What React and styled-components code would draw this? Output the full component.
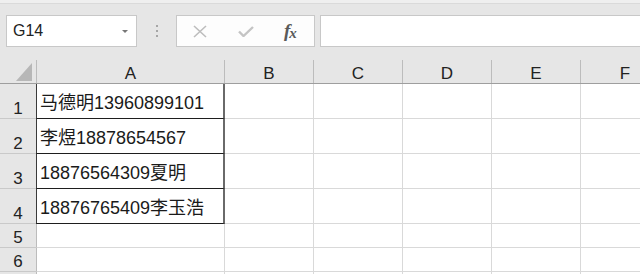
import React from "react";
import styled, { createGlobalStyle } from "styled-components";

const GlobalStyle = createGlobalStyle`
  body {
    margin: 0;
    background: #ffffff;
    font-family: "Liberation Sans", "Noto Sans CJK SC", sans-serif;
    overflow: hidden;
  }
`;

const columns = ["A", "B", "C", "D", "E", "F"];

const rows = [
  { n: 1, text: "马德明13960899101", tall: true, boxed: true },
  { n: 2, text: "李煜18878654567", tall: true, boxed: true },
  { n: 3, text: "18876564309夏明", tall: true, boxed: true },
  { n: 4, text: "18876765409李玉浩", tall: true, boxed: true },
  { n: 5, text: "", tall: false },
  { n: 6, text: "", tall: false },
  // row 7 only peeks in at the bottom edge, its number is off-screen
  { n: "", text: "", tall: false },
];

const Sheet = () => {
  return (
    <Container>
      <GlobalStyle />
      <Toolbar>
        <NameBox>
          <span>G14</span>
          <Caret />
        </NameBox>
        <Grip>
          <i />
          <i />
          <i />
        </Grip>
        <FxBox>
          <svg width="14" height="13" viewBox="0 0 14 13">
            <path d="M1 1 L13 12 M13 1 L1 12" stroke="#bdbdbd" strokeWidth="1.6" fill="none" />
          </svg>
          <svg width="16" height="11" viewBox="0 0 16 11">
            <path d="M1 5.5 L5.5 10 L15 1" stroke="#c4c4c4" strokeWidth="2.4" fill="none" />
          </svg>
          <FxLabel>
            f<sub>x</sub>
          </FxLabel>
        </FxBox>
        <FormulaInput />
      </Toolbar>

      <Grid>
        <HeaderRow>
          <Corner>
            <svg width="17" height="18" viewBox="0 0 17 18">
              <polygon points="16,0 16,18 0,18" fill="#b7b7b7" />
            </svg>
          </Corner>
          {columns.map((c) => (
            <ColHead key={c} $first={c === "A"}>
              {c}
            </ColHead>
          ))}
        </HeaderRow>

        {rows.map((r, i) => (
          <Row key={i} $tall={r.tall}>
            <RowHead>{r.n}</RowHead>
            <Cell $first $boxed={r.boxed}>
              {r.text}
            </Cell>
            {columns.slice(1).map((c) => (
              <Cell key={c} />
            ))}
          </Row>
        ))}
      </Grid>
    </Container>
  );
};

export default function App() {
  return <Sheet />;
}

const Container = styled.div`
  width: 640px;
  height: 274px;
  overflow: hidden;
  background: #e6e6e6;
`;

const Toolbar = styled.div`
  height: 60px;
  box-sizing: border-box;
  border-top: 3px solid #efefef;
  box-shadow: inset 0 1px 0 #dadada;
  padding: 12px 0 0 6px;
  display: flex;
  align-items: flex-start;
`;

const Field = styled.div`
  height: 32px;
  box-sizing: border-box;
  background: #ffffff;
  border: 1px solid #c8c8c8;
`;

const NameBox = styled(Field)`
  width: 131px;
  display: flex;
  align-items: center;
  justify-content: space-between;
  padding: 0 8px 0 6px;
  font-size: 16px;
  color: #222;
`;

const Caret = styled.span`
  width: 0;
  height: 0;
  border-left: 3.5px solid transparent;
  border-right: 3.5px solid transparent;
  border-top: 3.5px solid #777;
  margin-top: 1px;
`;

const Grip = styled.div`
  width: 39px;
  height: 32px;
  display: flex;
  flex-direction: column;
  align-items: center;
  justify-content: center;
  gap: 3px;

  i {
    display: block;
    width: 2px;
    height: 2px;
    background: #a6a6a6;
  }
`;

const FxBox = styled(Field)`
  width: 139px;
  display: flex;
  align-items: center;
  padding: 0 0 0 16px;
  gap: 31px;
  background: #fdfdfd;
`;

const FxLabel = styled.span`
  font-family: "Liberation Serif", "DejaVu Serif", serif;
  font-style: italic;
  font-weight: bold;
  font-size: 19px;
  color: #5a5a5a;
  letter-spacing: -1px;
  margin-left: -1px;

  sub {
    font-size: 15px;
    vertical-align: -1px;
  }
`;

const FormulaInput = styled(Field)`
  flex: 1;
  margin-left: 5px;
  border-right: none;
`;

const Grid = styled.div`
  display: flex;
  flex-direction: column;
`;

const HeaderRow = styled.div`
  display: grid;
  grid-template-columns: 36px 189px repeat(5, 89px);
  height: 24px;
  box-sizing: border-box;
  border-bottom: 1px solid #9e9e9e;
  background: #e6e6e6;
`;

const Corner = styled.div`
  display: flex;
  align-items: flex-end;
  justify-content: flex-end;
  padding: 0 3px 2px 0;
`;

const ColHead = styled.div`
  display: flex;
  align-items: flex-end;
  justify-content: center;
  font-size: 17px;
  line-height: 18px;
  color: #222;
  border-right: 1px solid #bcbcbc;
  border-left: ${(p) => (p.$first ? "1px solid #bcbcbc" : "none")};
`;

const Row = styled.div`
  display: grid;
  grid-template-columns: 36px 189px repeat(5, 89px);
  height: ${(p) => (p.$tall ? "35px" : "24px")};
  background: #ffffff;
`;

const RowHead = styled.div`
  display: flex;
  align-items: flex-end;
  justify-content: center;
  background: #e6e6e6;
  border-bottom: 1px solid #c9c9c9;
  font-size: 17px;
  line-height: 18px;
  color: #222;
  box-sizing: border-box;
`;

const Cell = styled.div`
  display: flex;
  align-items: flex-end;
  box-sizing: border-box;
  padding: 0 0 4px 3px;
  font-size: 18px;
  line-height: 22px;
  color: #1a1a1a;
  white-space: nowrap;
  border-bottom: 1px solid ${(p) => (p.$boxed ? "#1e1e1e" : "#d9d9d9")};
  border-right: ${(p) =>
    p.$boxed ? "2px solid #6a6a6a" : "1px solid #d9d9d9"};
  border-left: ${(p) =>
    p.$first ? (p.$boxed ? "1px solid #3a3a3a" : "1px solid #bcbcbc") : "none"};
`;
